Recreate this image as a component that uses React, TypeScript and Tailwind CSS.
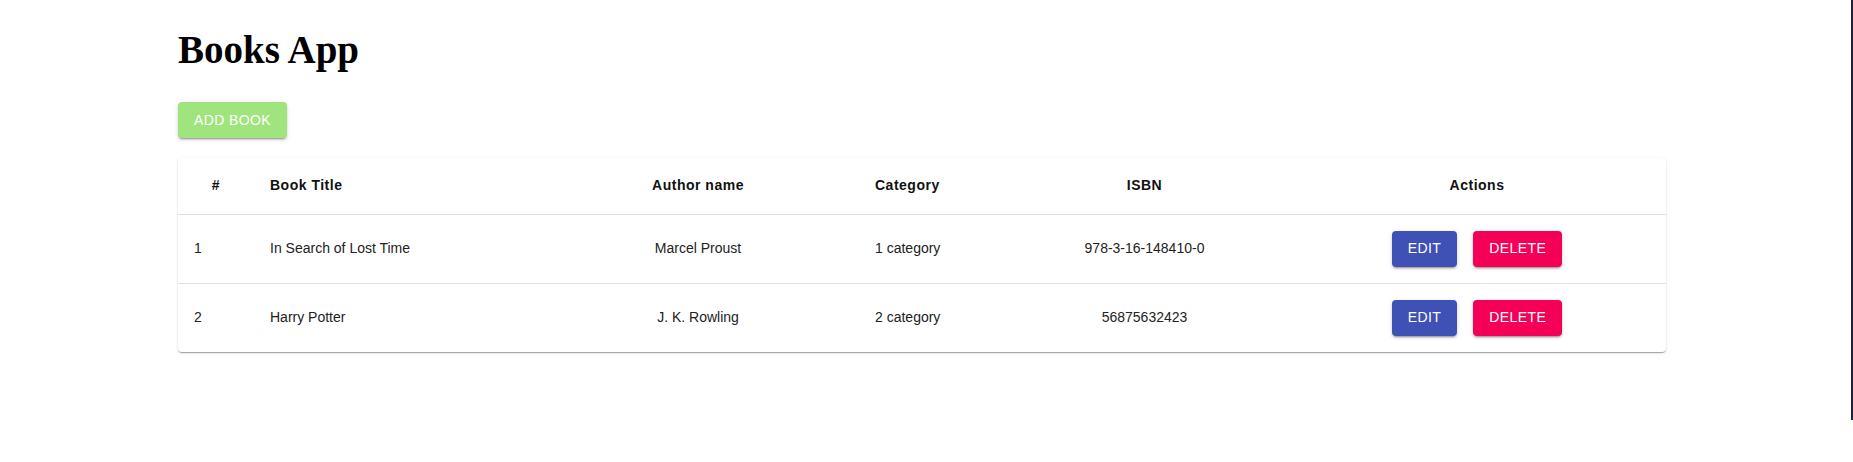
import React from 'react'

const books = [
  { id: 1, title: 'In Search of Lost Time', author: 'Marcel Proust', category: '1 category', isbn: '978-3-16-148410-0' },
  { id: 2, title: 'Harry Potter', author: 'J. K. Rowling', category: '2 category', isbn: '56875632423' },
]

const btnShadow =
  'shadow-[0px_3px_1px_-2px_rgba(0,0,0,0.2),0px_2px_2px_0px_rgba(0,0,0,0.14),0px_1px_5px_0px_rgba(0,0,0,0.12)]'

export default function App() {
  return (
    <div className="relative min-h-[462px] bg-white font-['Liberation_Sans',Arial,sans-serif]">
      {/* dark strip on the right edge */}
      <div className="absolute right-0 top-0 h-[420px] w-[2px] bg-[#1b2340]" />

      <div className="pl-[178px] pt-[28px]">
        <h1 className="font-['Liberation_Serif','Times_New_Roman',serif] text-[39px] font-bold leading-[44px] text-black">
          Books App
        </h1>

        <button
          className={`mt-[30px] h-[36px] rounded-[4px] bg-[#9fe47c] px-4 text-[14px] uppercase tracking-[0.4px] text-white ${btnShadow}`}
        >
          Add Book
        </button>

        {/* Table */}
        <div className="mt-[20px] w-[1488px] rounded-[4px] bg-white shadow-[0px_2px_1px_-1px_rgba(0,0,0,0.2),0px_1px_1px_0px_rgba(0,0,0,0.14),0px_1px_3px_0px_rgba(0,0,0,0.12)]">
          <table className="w-full table-fixed border-collapse text-[14px]">
            <colgroup>
              <col className="w-[76px]" />
              <col className="w-[283px]" />
              <col className="w-[322px]" />
              <col className="w-[142px]" />
              <col className="w-[287px]" />
              <col className="w-[378px]" />
            </colgroup>
            <thead>
              <tr className="border-b border-[#e0e0e0] text-[#111] font-bold tracking-[0.5px]">
                <th className="h-[56px] px-4 text-center">#</th>
                <th className="px-4 text-left">Book Title</th>
                <th className="px-4 text-center">Author name</th>
                <th className="px-4 text-left">Category</th>
                <th className="px-4 text-center">ISBN</th>
                <th className="px-4 text-center">Actions</th>
              </tr>
            </thead>
            <tbody className="text-[#222]">
              {books.map((b, i) => (
                <tr key={b.id} className={i < books.length - 1 ? 'border-b border-[#e0e0e0]' : ''}>
                  <td className="h-[69px] px-4 text-left">{b.id}</td>
                  <td className="px-4 text-left">{b.title}</td>
                  <td className="px-4 text-center">{b.author}</td>
                  <td className="px-4 text-left">{b.category}</td>
                  <td className="px-4 text-center">{b.isbn}</td>
                  <td className="px-4">
                    <div className="flex items-center justify-center gap-4">
                      <button
                        className={`h-[36px] rounded-[4px] bg-[#3f51b5] px-4 text-[14px] uppercase tracking-[0.4px] text-white ${btnShadow}`}
                      >
                        Edit
                      </button>
                      <button
                        className={`h-[36px] rounded-[4px] bg-[#f50057] px-4 text-[14px] uppercase tracking-[0.4px] text-white ${btnShadow}`}
                      >
                        Delete
                      </button>
                    </div>
                  </td>
                </tr>
              ))}
            </tbody>
          </table>
        </div>
      </div>
    </div>
  )
}
